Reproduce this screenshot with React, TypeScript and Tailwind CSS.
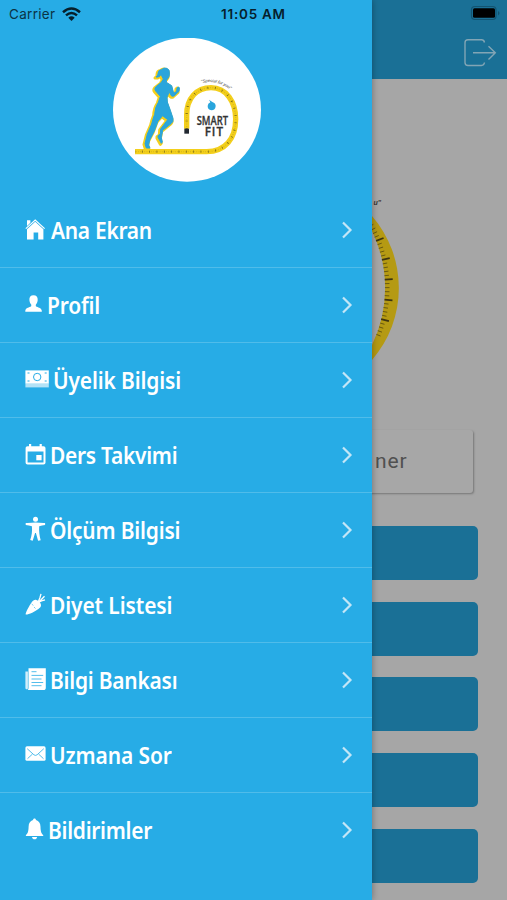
import type { ReactNode } from 'react';

// Menu icons share a 25px tall box, the width changes per icon
const icons: Record<string, ReactNode> = {
  home: (
    <>
      <path d="M.8 10.6 10.2 2l9.4 8.6" fill="none" stroke="white" strokeWidth="1.2" />
      <path d="M2 2.2h3.4v2.6L2 8z" />
      <path d="M2 11.2 10.2 3.8l8.2 7.4v10.2h-5.2v-6.8H8.6v6.8H2z" />
    </>
  ),
  profile: (
    <path d="M8.5 2.2c2.9 0 4.4 1.900 4.200 4.800-.1 2-.8 3.200-1.600 4.200-.5.7-.4 2 .1 2.300 1.200.9 5.200 1 5.600 4.200v1H.3v-1c.4-3.200 4.400-3.300 5.600-4.200.5-.3.6-1.600.1-2.300-.8-1-1.500-2.200-1.600-4.200-.2-2.900 1.200-4.800 4.100-4.800z" />
  ),
  cash: (
    <>
      <path d="M.4 15.700h23.400v3.700H.4z" opacity=".65" />
      <path d="M.4 2.400h23.400v13.300H.4z" />
      <g fill="none" stroke="#27ace6" strokeWidth="1">
        <circle cx="12.200" cy="9" r="3.700" />
        <path d="M2.500 5h2M2.500 13h2M21.700 5h-2M21.700 13h-2" />
      </g>
    </>
  ),
  calendar: (
    <>
      <path
        fillRule="evenodd"
        d="M4 1h2.200v2.200h8.400V1h2.200v2.200h1.700c1.200 0 2 .8 2 2v14.300c0 1.200-.8 2-2 2H2.600c-1.200 0-2-.8-2-2V5.200c0-1.200.8-2 2-2H4zM2.600 8.600v10.900h15.900V8.600z"
      />
      <path d="M11.300 12h5.300v5.300h-5.300z" />
    </>
  ),
  body: (
    <>
      <circle cx="10.500" cy="1.300" r="2.500" />
      <path d="M.7 5c3.300.3 6.500-.4 9.800-.4s6.500.7 9.600.4v2.100c-2.200.4-3.900.6-5.900 1.100-.4 5.200.3 9.500 1.500 14l-2.600.5-2.200-7.600h-.8l-2.400 7.600-2.500-.6c1.500-4.400 2.200-8.700 1.700-13.900C5 7.700 3 7.500.7 7.100z" />
    </>
  ),
  carrot: (
    <>
      <path d="M.7 21.500c-.5-1.200 3.400-8.600 6-12.300 1.200-1.800 3-2.800 4.600-2.300 2.600.6 4.600 2.800 4.700 5 .1 1.600-.9 2.800-2.600 4C10.500 18.200 2 22.400.7 21.500z" />
      <path d="m13 9.500 2-5 1-3.700M13.500 9.500l6-6.300M13.500 9.500l4-2 2.500-.6" fill="none" stroke="white" strokeWidth="1.300" />
      <path d="m6.700 11 1.700 1.500M10.500 15.500l-1.500-1.500" stroke="#27ace6" strokeWidth=".6" />
    </>
  ),
  paper: (
    <>
      <path d="M2.900 3.600v16.300c0 2-2.500 1.800-2.500-.2V3.600z" opacity=".8" />
      <path d="M3.500.2h17.300v19.500c0 1.500-.8 2.300-2.200 2.300H2.500c.7-.4 1-1 1-2.300z" />
      <path d="M6.500 3.700h5M6.500 7.400h11.700M6.500 11h10M6.500 14.500h11.700M6.500 17.700h10" stroke="#27ace6" strokeWidth=".8" />
    </>
  ),
  mail: (
    <>
      <path d="M2 3.300h17q1.600 0 1.600 1.600v11.300q0 1.600-1.600 1.600H2q-1.600 0-1.600-1.600V4.900Q.4 3.300 2 3.300z" />
      <path d="m2.200 5.700 6.700 6.100q1.600 1.200 3.200 0l6.700-6.100M2.500 15.700l5-4.700M18.500 15.700l-5-4.700" fill="none" stroke="#27ace6" strokeWidth=".8" />
    </>
  ),
  bell: (
    <>
      <path d="M9.500.4c.9 0 1.400.7 1.500 1.600 3 .8 4.400 3.400 4.500 6.700.1 4.800.9 6.800 2.700 8.300v.9H.9V17c1.800-1.500 2.600-3.500 2.700-8.300C3.700 5.400 5 2.800 8 2 8.100 1.100 8.600.4 9.500.4z" />
      <path d="M7 18.900h5.100c-.2 1.500-1.200 2.300-2.500 2.300S7.200 20.400 7 18.900z" />
    </>
  ),
};

const menuItems = [
  { icon: 'home', label: 'Ana Ekran', width: 25.5, tracking: 'tracking-[-0.3px]' },
  { icon: 'profile', label: 'Profil', width: 22, tracking: 'tracking-[-0.2px]' },
  { icon: 'cash', label: 'Üyelik Bilgisi', width: 28, tracking: 'tracking-[-0.15px]' },
  { icon: 'calendar', label: 'Ders Takvimi', width: 25, tracking: 'tracking-[-0.3px]' },
  { icon: 'body', label: 'Ölçüm Bilgisi', width: 25, tracking: 'tracking-[-0.2px]' },
  { icon: 'carrot', label: 'Diyet Listesi', width: 25, tracking: 'tracking-[-0.1px]' },
  { icon: 'paper', label: 'Bilgi Bankası', width: 25, tracking: 'tracking-[-0.25px]' },
  { icon: 'mail', label: 'Uzmana Sor', width: 25, tracking: 'tracking-[-0.1px]' },
  { icon: 'bell', label: 'Bildirimler', width: 23, tracking: 'tracking-[-0.3px]' },
];

const tape = 'M260 296V255C260 205 290 173 333 173C380 173 407 217 407 267C407 327 375 365 320 365H105';

function Logo() {
  return (
    <svg width="148" height="144" viewBox="39 24 444 432">
      <ellipse cx="261" cy="239" rx="222" ry="216" fill="white" />
      <path d={tape} fill="none" stroke="#f3cf1c" strokeWidth="16" />
      <path d={tape} fill="none" stroke="#77671b" strokeWidth="4" strokeDasharray="1.500 5" opacity=".35" />
      <path d={tape} fill="none" stroke="#6b5d16" strokeWidth="7" strokeDasharray="2 20" />
      <rect x="253" y="296" width="14" height="15" fill="#222831" />
      <Runner color="#f3cf1c" outline={9} className="-translate-x-[3px] translate-y-[3px]" />
      <Runner color="#29a5dc" outline={3} />
      <path d="M327 209 337 216Q347 219 347 228Q346 241 334 241Q323 239 323 228Q323 220 331 217z" fill="#29a5dc" />
      <path id="slogan" d="M304 159Q350 148 394 181" fill="none" />
      <text fontSize="13" fill="#444" fontFamily="Liberation Sans, sans-serif" fontStyle="italic">
        <textPath href="#slogan" textLength="92">"Special for you"</textPath>
      </text>
      <text fill="#333" fontFamily="Open Sans, sans-serif" fontWeight="600" stroke="#333" strokeWidth=".8">
        <tspan x="290" y="285" fontSize="35" textLength="94" lengthAdjust="spacingAndGlyphs">SMART</tspan>
        <tspan x="314" y="318" fontSize="35" letterSpacing="3">FIT</tspan>
      </text>
    </svg>
  );
}

function Runner({ color, outline, className }: { color: string; outline: number; className?: string }) {
  return (
    <g fill={color} stroke={color} strokeWidth={outline} strokeLinejoin="round" className={className}>
      <path d="M184 119Q191 112 201 115Q210 119 208 132Q209 140 203 146Q198 150 199 157L215 167L221 190L230 184L231 174Q237 168 238 174L237 184L222 198Q214 201 212 194L207 184Q206 193 201 202L202 216Q211 240 219 265Q221 276 213 281L188 301L184 323L187 336L184 340L174 322V317L181 312L182 297L203 269L188 257L174 273L163 303L149 330L146 345L150 354L139 354L135 341L142 312L155 282Q158 268 164 253Q165 231 175 217L181 199L167 183Q162 177 167 171L184 157L190 147Q184 139 184 131Q180 143 168 141Q176 135 174 130Q175 119 184 119z" />
    </g>
  );
}

// Ruler marks along the inside of the big tape
const marks = Array.from({ length: 29 }, (_, i) => {
  const step = i - 14;
  const angle = ((step * 1.77 - 3.7) * Math.PI) / 180;
  const major = step % 5 === 0;
  const end = major ? 137 : 133.5;
  return {
    major,
    x1: 256 + 129 * Math.cos(angle),
    y1: 288 + 129 * Math.sin(angle),
    x2: 256 + end * Math.cos(angle),
    y2: 288 + end * Math.sin(angle),
  };
});

function BackgroundTape() {
  return (
    <svg className="block" width="135" height="170" viewBox="372 195 135 170">
      <path d="M372 216A110 110 0 0 1 372 360V345A130 130 0 0 0 372 231z" fill="#b59a13" />
      {marks.map((m, i) => (
        <line key={i} x1={m.x1} y1={m.y1} x2={m.x2} y2={m.y2} stroke="#3d3410" strokeWidth={m.major ? 1.8 : 0.9} opacity={m.major ? 1 : 0.7} />
      ))}
      <text x="373.5" y="205" fontSize="7" fontWeight="700" fill="#333" fontFamily="Liberation Sans, sans-serif" fontStyle="italic">u"</text>
    </svg>
  );
}

export default function App() {
  return (
    <div className="relative h-[900px] w-[507px] overflow-hidden bg-[#a6a6a6] font-['Noto_Sans',sans-serif]">
      {/* Dimmed home screen */}
      <div className="flex h-full flex-col">
        <header className="flex h-[79px] shrink-0 flex-col items-end bg-[#1a7096]">
          <svg className="mt-[5px] mr-[5px]" width="32" height="16" viewBox="470 5 32 16">
            <rect x="471.5" y="6.5" width="24.5" height="13" rx="3.5" fill="none" stroke="#135471" strokeWidth="1.2" />
            <rect x="473" y="8.3" width="22" height="9.5" rx="1.5" fill="black" />
            <path d="M498 11q3 2 0 4.5z" fill="#135471" />
          </svg>
          <svg className="mt-[17px] mr-[9px]" width="34" height="30" viewBox="464 38 34 30" fill="none" stroke="#82a5b5" strokeWidth="1.4">
            <path d="M484.5 42.5Q484 39.8 481.5 39.8H468Q465 39.8 465 42.8V62.5Q465 65.5 468 65.5H481.5Q484 65.5 484.5 62.5M473 52.800H495M488.500 46.200 495.300 52.800 488.500 59.500" />
          </svg>
        </header>
        <div className="mt-[116px] self-end">
          <BackgroundTape />
        </div>
        <div className="mt-[65px] mr-[34px] ml-[34px] flex h-[63px] shrink-0 items-center rounded-[3px] bg-[#a7a7a7] pl-[341px] font-[Roboto,sans-serif] text-[21px] tracking-[0.9px] text-[#505050] shadow-[1px_1px_2px_#777]">
          ner
        </div>
        <div className="mt-[33px] mr-[29.5px] ml-[29.5px] flex shrink-0 flex-col gap-[21.7px]">
          {[1, 2, 3, 4, 5].map((n) => (
            <div key={n} className="h-[54px] rounded-[5px] bg-[#1a7096]" />
          ))}
        </div>
      </div>

      {/* Drawer */}
      <aside className="absolute inset-y-0 left-0 flex w-[372.4px] flex-col bg-[#27ace6] shadow-[0_0_7px_rgba(0,0,0,0.35)]">
        <div className="flex h-7 shrink-0 items-center pl-[9px] font-[Inter,sans-serif] text-[13.5px] text-[#0b3345]">
          <span className="w-[53px] tracking-[0.3px]">Carrier</span>
          <svg width="19" height="15" viewBox="0 0 19 15" fill="none" stroke="#06202c" strokeWidth="2.5">
            <path d="M1 5.2Q9.500-2.200 18 5.200M4 8.400Q9.500 3.600 15 8.400" />
            <path d="M9.500 14 6.300 10.700Q9.500 8 12.700 10.700z" fill="#06202c" stroke="none" />
          </svg>
          <span className="ml-[140px] font-semibold tracking-[0.75px] whitespace-nowrap text-[#06202c]">11:05 AM</span>
        </div>
        <div className="flex h-[165px] shrink-0 justify-center pt-[10px] pl-[1.6px]">
          <Logo />
        </div>
        <nav>
          {menuItems.map((item) => (
            <a key={item.icon} className="flex h-[75px] items-center border-b border-[#50bcea] pr-[19px] pl-[25px] last:border-transparent">
              <svg className="shrink-0 overflow-visible" width={item.width} height="25" fill="white">
                {icons[item.icon]}
              </svg>
              <span className={`flex-1 origin-left scale-x-[0.91] text-[23px] leading-[30px] font-semibold whitespace-nowrap text-white ${item.tracking}`}>
                {item.label}
              </span>
              <svg width="12" height="18" viewBox="0 0 12 18" fill="none" stroke="#c3e6f7" strokeWidth="2.2">
                <path d="m2 1.500 7.500 7.500L2 16.500" />
              </svg>
            </a>
          ))}
        </nav>
      </aside>
    </div>
  );
}
